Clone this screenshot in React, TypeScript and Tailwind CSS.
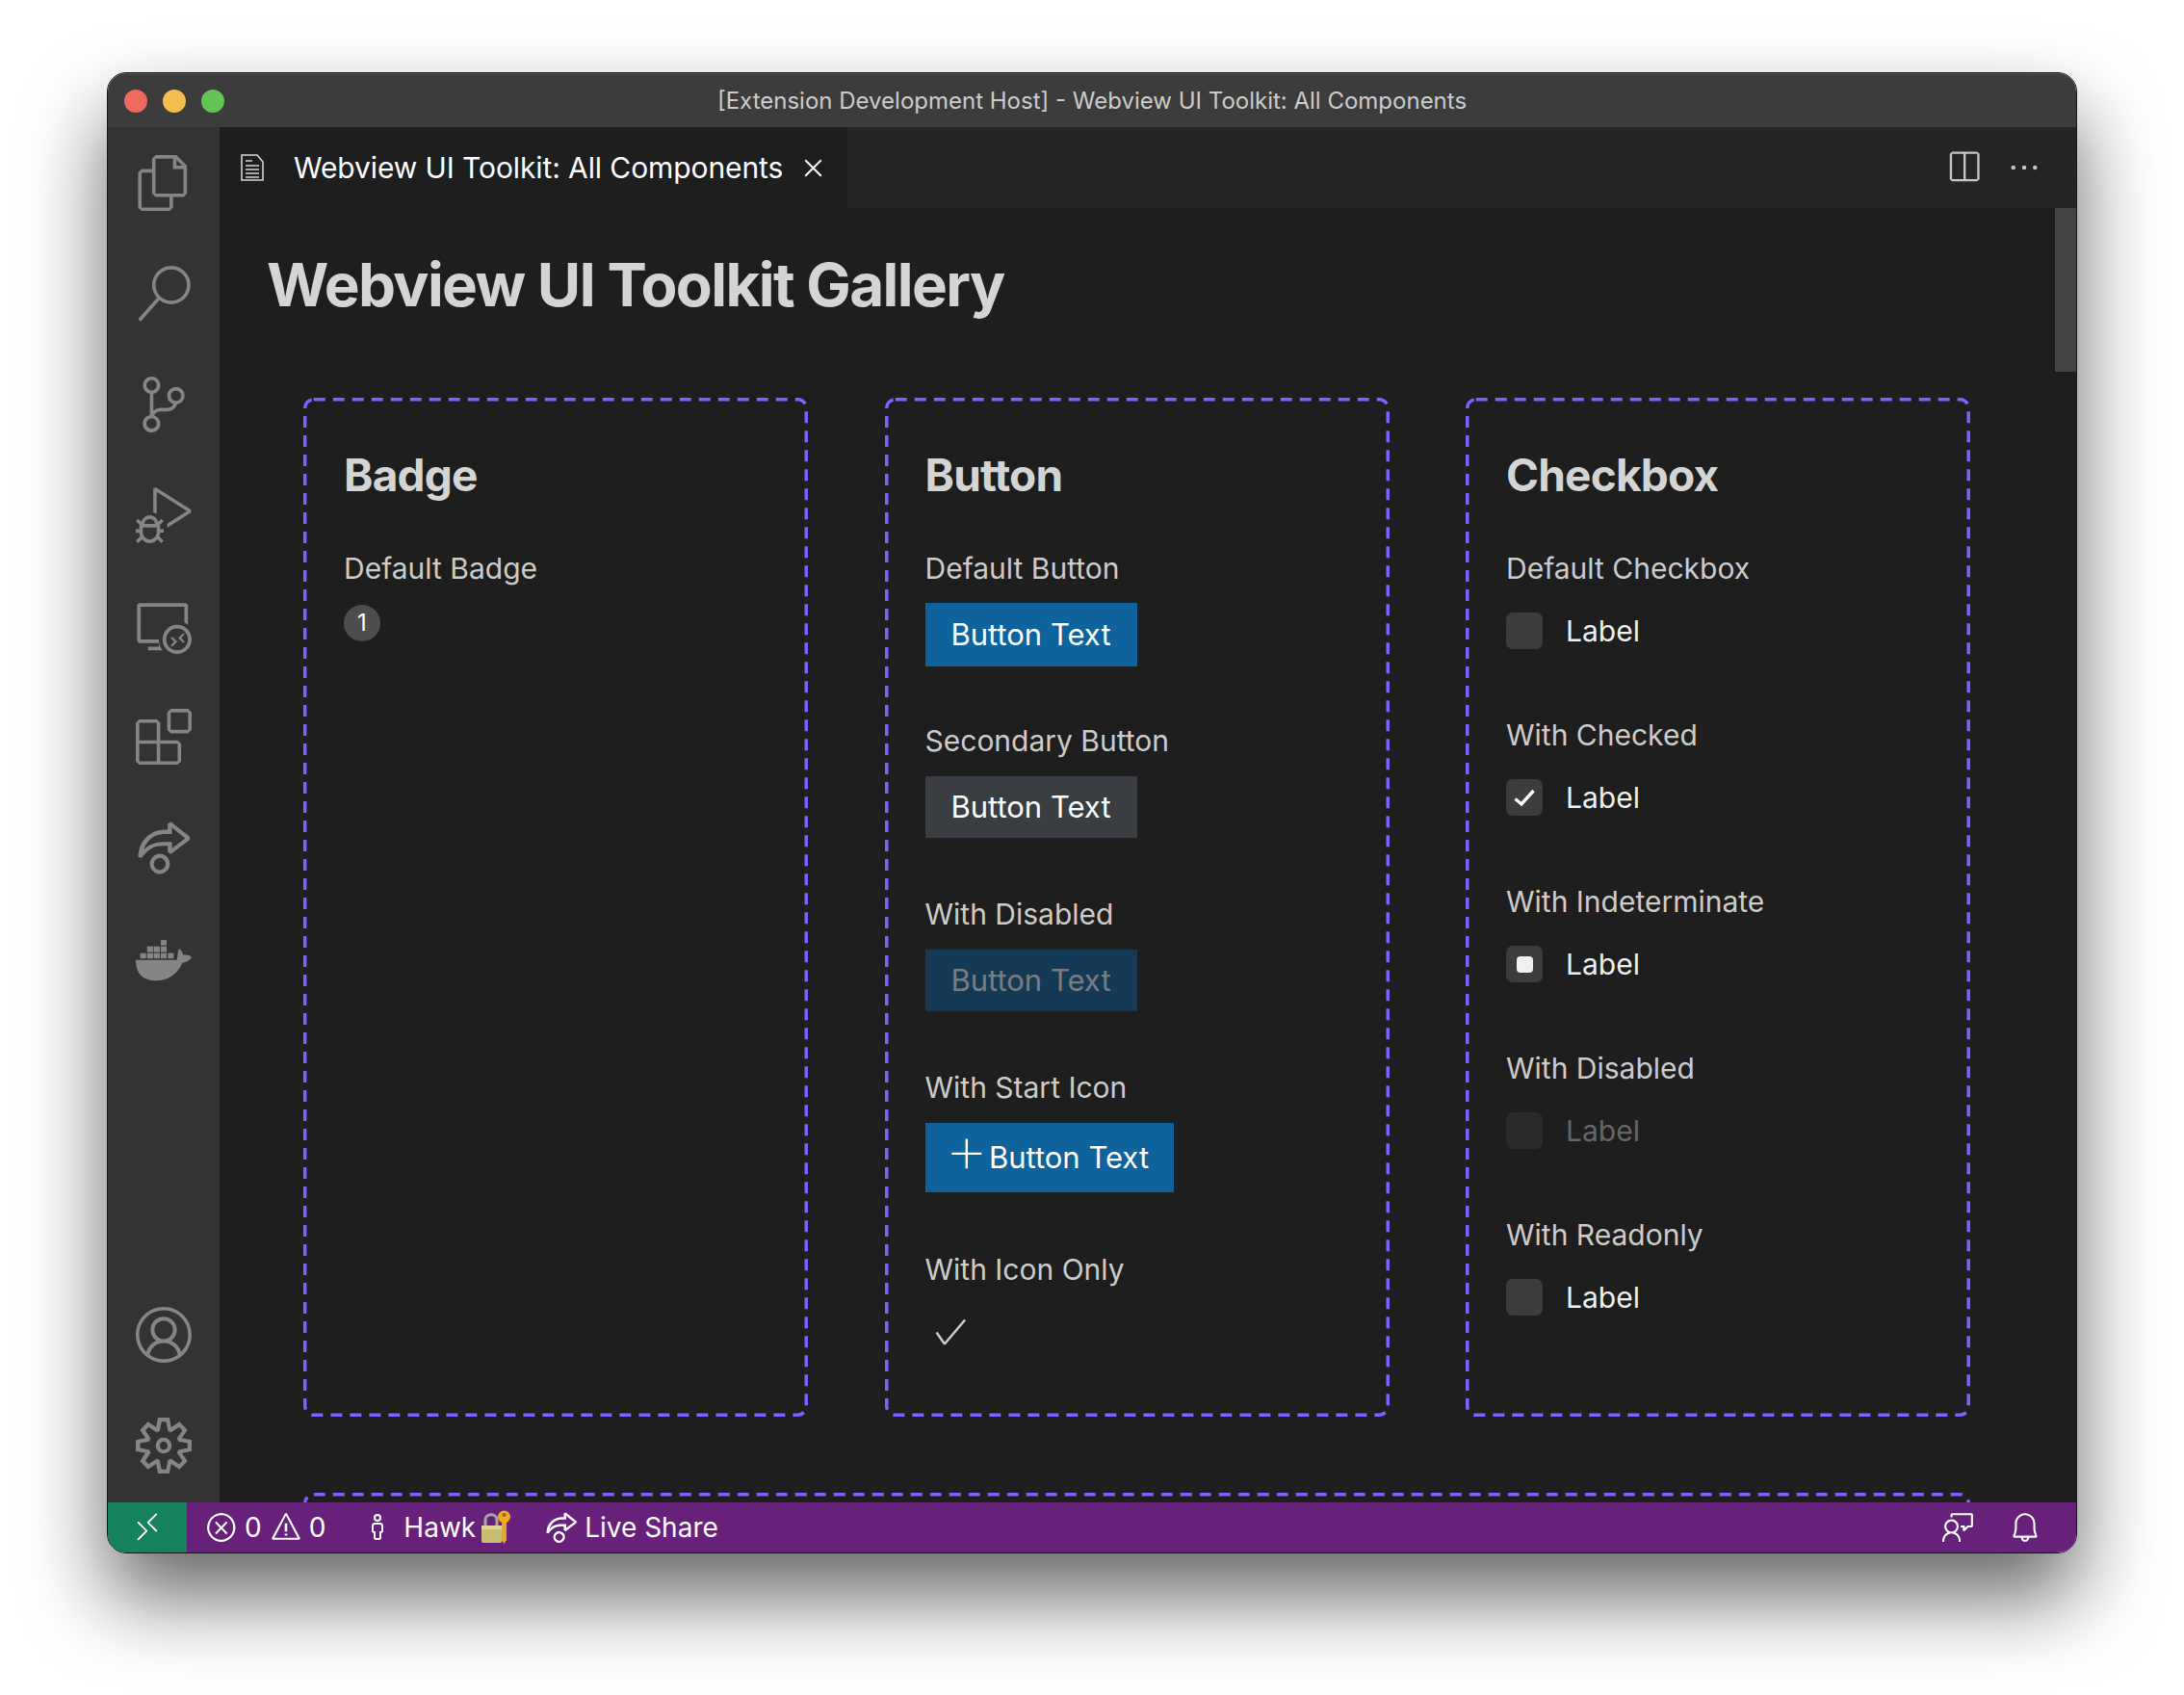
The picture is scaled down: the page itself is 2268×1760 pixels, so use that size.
import type { ReactNode } from "react";
import {
  VscAccount,
  VscAdd,
  VscBell,
  VscCheck,
  VscClose,
  VscDebugAlt,
  VscEllipsis,
  VscError,
  VscExtensions,
  VscFeedback,
  VscFiles,
  VscLiveShare,
  VscPerson,
  VscRemote,
  VscRemoteExplorer,
  VscSearch,
  VscSettingsGear,
  VscSourceControl,
  VscSplitHorizontal,
  VscWarning,
} from "react-icons/vsc";

function DockerIcon() {
  return (
    <svg className="mt-[4px]" width="58" height="44" viewBox="96 1390 172 120" preserveAspectRatio="none" fill="#858585">
      <rect x="110" y="1430" width="18" height="15" />
      <rect x="131" y="1430" width="19" height="15" />
      <rect x="152" y="1430" width="18" height="15" />
      <rect x="173" y="1430" width="18" height="15" />
      <rect x="195" y="1430" width="18" height="15" />
      <rect x="131" y="1411" width="19" height="16" />
      <rect x="152" y="1411" width="18" height="16" />
      <rect x="173" y="1411" width="18" height="16" />
      <rect x="173" y="1393" width="18" height="15" />
      <path d="M96 1449H222C226 1440 224 1425 230 1417C238 1423 240 1430 243 1436C252 1434 262 1436 268 1441C262 1452 250 1456 240 1457C224 1490 196 1508 160 1508C120 1508 96 1490 96 1449Z" />
    </svg>
  );
}

function LockKeyIcon() {
  return (
    <svg width="30" height="36" viewBox="0 0 30 36">
      <path d="M4 18V10C4 3 16 3 16 10V18" fill="none" stroke="#a9a9a0" strokeWidth="3" />
      <rect x="0" y="16" width="21" height="18" rx="2" fill="#c9bd72" />
      <rect x="0" y="16" width="21" height="4" fill="#ded59a" />
      <path d="M21 12H26V31L23.5 35L21 32Z" fill="#e5a51f" />
      <circle cx="23.5" cy="7" r="6.5" fill="#eeaa20" />
      <circle cx="23.5" cy="5" r="2" fill="#8a6412" />
    </svg>
  );
}

function PreviewIcon() {
  return (
    <svg className="shrink-0" width="24" height="28" viewBox="0 0 24 28" fill="none" stroke="#d4d4d4" strokeWidth="1.6">
      <path d="M1 1H17L23 8V27H1Z" />
      <path d="M5 7H12M5 12H19M5 16H19M5 20H19M5 24H19" />
    </svg>
  );
}

function Panel({ title, children }: { title: string; children?: ReactNode }) {
  return (
    <section className="relative h-[1058px] px-[42px] pt-[56px]">
      <svg className="absolute inset-0 h-full w-full" fill="none">
        <rect x="1.75" y="1.75" width="520.5" height="1054.5" rx="9" stroke="#7a63ff" strokeWidth="3.5" strokeDasharray="12 8" />
      </svg>
      <h2 className="text-[46px] leading-[48px] font-bold tracking-[-0.8px] text-[#d4d4d4]">{title}</h2>
      {children}
    </section>
  );
}

function FieldLabel({ children }: { children: ReactNode }) {
  return <div className="h-9 text-[30px] leading-9 text-[#cccccc]">{children}</div>;
}

function ButtonField({ label, wrapClass, className, children }: { label: string; wrapClass: string; className: string; children: ReactNode }) {
  return (
    <div className={wrapClass}>
      <FieldLabel>{label}</FieldLabel>
      <div className={className}>{children}</div>
    </div>
  );
}

function CheckField({ label, boxClass, textClass, children }: { label: string; boxClass?: string; textClass?: string; children?: ReactNode }) {
  return (
    <div className="mb-[71px]">
      <FieldLabel>{label}</FieldLabel>
      <div className="mt-[28px] flex h-[38px] items-center">
        <span className={`flex h-[38px] w-[38px] items-center justify-center rounded-[7px] ${boxClass ?? "bg-[#3c3c3c]"}`}>{children}</span>
        <span className={`ml-[24px] text-[30px] leading-9 ${textClass ?? "text-[#f0f0f0]"}`}>Label</span>
      </div>
    </div>
  );
}

const activityTop = [
  <VscFiles size={58} />,
  <VscSearch size={58} />,
  <VscSourceControl size={58} />,
  <VscDebugAlt size={58} />,
  <VscRemoteExplorer size={58} />,
  <VscExtensions size={58} />,
  <VscLiveShare size={58} />,
  <DockerIcon />,
];

export default function App() {
  return (
    <main className="min-h-screen bg-white pt-[75px] pl-[111px] font-['Inter',sans-serif]">
      <div className="flex h-[1538px] w-[2046px] flex-col overflow-hidden rounded-[20px] border border-[#141414] shadow-[0_45px_85px_rgba(0,0,0,0.6)]">
        {/* TITLE BAR */}
        <header className="relative flex h-[56px] shrink-0 items-center justify-center border-t border-[#555555] bg-[#3c3c3c]">
          <div className="absolute top-[16px] left-[17px] flex gap-[16px]">
            <span className="h-6 w-6 rounded-full bg-[#ee6a5f]" />
            <span className="h-6 w-6 rounded-full bg-[#f5bd4f]" />
            <span className="h-6 w-6 rounded-full bg-[#61c454]" />
          </div>
          <span className="text-[24px] text-[#cccccc]">[Extension Development Host] - Webview UI Toolkit: All Components</span>
        </header>

        <div className="flex min-h-0 flex-1">
          {/* ACTIVITY BAR */}
          <nav className="flex w-[116px] shrink-0 flex-col items-center justify-between bg-[#333333] text-[#858585]">
            <div className="flex flex-col items-center">
              {activityTop.map((icon, i) => (
                <div key={i} className="flex h-[115px] w-full items-center justify-center">{icon}</div>
              ))}
            </div>
            <div className="flex flex-col items-center pb-[2px]">
              <div className="flex h-[115px] items-center justify-center"><VscAccount size={58} /></div>
              <div className="flex h-[115px] items-center justify-center"><VscSettingsGear size={58} /></div>
            </div>
          </nav>

          {/* EDITOR */}
          <div className="flex min-w-0 flex-1 flex-col bg-[#1e1e1e]">
            <div className="flex h-[84px] shrink-0 items-center bg-[#252526]">
              <div className="flex h-full w-[652px] items-center bg-[#1e1e1e] pl-[22px]">
                <PreviewIcon />
                <span className="ml-[31px] text-[30px] tracking-[-0.1px] whitespace-nowrap text-white">Webview UI Toolkit: All Components</span>
                <VscClose size={33} className="ml-[15px] shrink-0 text-white" />
              </div>
              <div className="ml-auto flex items-center pr-[36px] text-[#c5c5c5]">
                <VscSplitHorizontal size={38} />
                <VscEllipsis size={36} className="ml-[26px]" />
              </div>
            </div>

            <div className="relative min-h-0 flex-1 overflow-hidden">
              <div className="absolute top-0 right-0 h-[170px] w-[22px] bg-[#444444]" />
              <h1 className="mt-[46px] ml-[49px] text-[62px] leading-[68px] font-bold tracking-[-1.6px] text-[#d4d4d4]">Webview UI Toolkit Gallery</h1>

              <div className="mt-[83px] ml-[87px] grid grid-cols-[524px_524px_524px] gap-x-[79.5px] gap-y-[79px]">
                <Panel title="Badge">
                  <div className="mt-[55px]"><FieldLabel>Default Badge</FieldLabel></div>
                  <div className="mt-[20px] flex h-[38px] w-[38px] items-center justify-center rounded-full bg-[#4d4d4d] text-[24px] text-white">1</div>
                </Panel>

                <Panel title="Button">
                  <ButtonField label="Default Button" wrapClass="mt-[55px]" className="mt-[18px] flex h-[66px] w-[220px] items-center justify-center bg-[#0e639c] text-[31px] text-white">Button Text</ButtonField>
                  <ButtonField label="Secondary Button" wrapClass="mt-[59px]" className="mt-[19px] flex h-[64px] w-[220px] items-center justify-center bg-[#3a3d41] text-[31px] text-white">Button Text</ButtonField>
                  <ButtonField label="With Disabled" wrapClass="mt-[61px]" className="mt-[19px] flex h-[64px] w-[220px] items-center justify-center bg-[#153a56] text-[31px] text-[#7a7d80]">Button Text</ButtonField>
                  <ButtonField label="With Start Icon" wrapClass="mt-[61px]" className="mt-[19px] flex h-[72px] w-[258px] items-center justify-center gap-[3px] bg-[#0e639c] text-[31px] text-white">
                    <VscAdd size={38} className="-mt-[6px]" />
                    Button Text
                  </ButtonField>
                  <ButtonField label="With Icon Only" wrapClass="mt-[62px]" className="mt-[27px] ml-[6px] text-[#cccccc]">
                    <VscCheck size={40} />
                  </ButtonField>
                </Panel>

                <Panel title="Checkbox">
                  <div className="mt-[55px]">
                    <CheckField label="Default Checkbox" />
                    <CheckField label="With Checked">
                      <svg width="22" height="19" viewBox="0 0 22 19" fill="none" stroke="#ffffff" strokeWidth="3.4">
                        <path d="M1.5 10.5L8 16L20.5 2" />
                      </svg>
                    </CheckField>
                    <CheckField label="With Indeterminate">
                      <span className="h-[17px] w-[17px] rounded-[4px] bg-[#f0f0f0]" />
                    </CheckField>
                    <CheckField label="With Disabled" boxClass="bg-[#2b2b2b]" textClass="text-[#666666]" />
                    <CheckField label="With Readonly" />
                  </div>
                </Panel>

                <section className="relative col-span-3 h-[200px]">
                  <svg className="absolute inset-0 h-full w-full" fill="none">
                    <rect x="1.75" y="1.75" width="1727.5" height="300" rx="9" stroke="#7a63ff" strokeWidth="3.5" strokeDasharray="12 8" />
                  </svg>
                </section>
              </div>
            </div>
          </div>
        </div>

        {/* STATUS BAR */}
        <footer className="flex h-[52px] shrink-0 items-center bg-[#68217a] text-[28px] text-white">
          <div className="flex h-full w-[82px] items-center justify-center bg-[#16825d]">
            <VscRemote size={34} />
          </div>
          <div className="ml-[19px] flex items-center">
            <VscError size={34} />
            <span className="ml-[7px]">0</span>
            <VscWarning size={34} className="ml-[8px]" />
            <span className="ml-[7px]">0</span>
          </div>
          <div className="ml-[38px] flex items-center">
            <VscPerson size={32} />
            <span className="ml-[11px]">Hawk</span>
            <span className="ml-[6px]"><LockKeyIcon /></span>
          </div>
          <div className="ml-[36px] flex items-center">
            <VscLiveShare size={34} />
            <span className="ml-[7px]">Live Share</span>
          </div>
          <div className="ml-auto flex items-center gap-[35px] pr-[36px]">
            <VscFeedback size={34} />
            <VscBell size={34} />
          </div>
        </footer>
      </div>
    </main>
  );
}
